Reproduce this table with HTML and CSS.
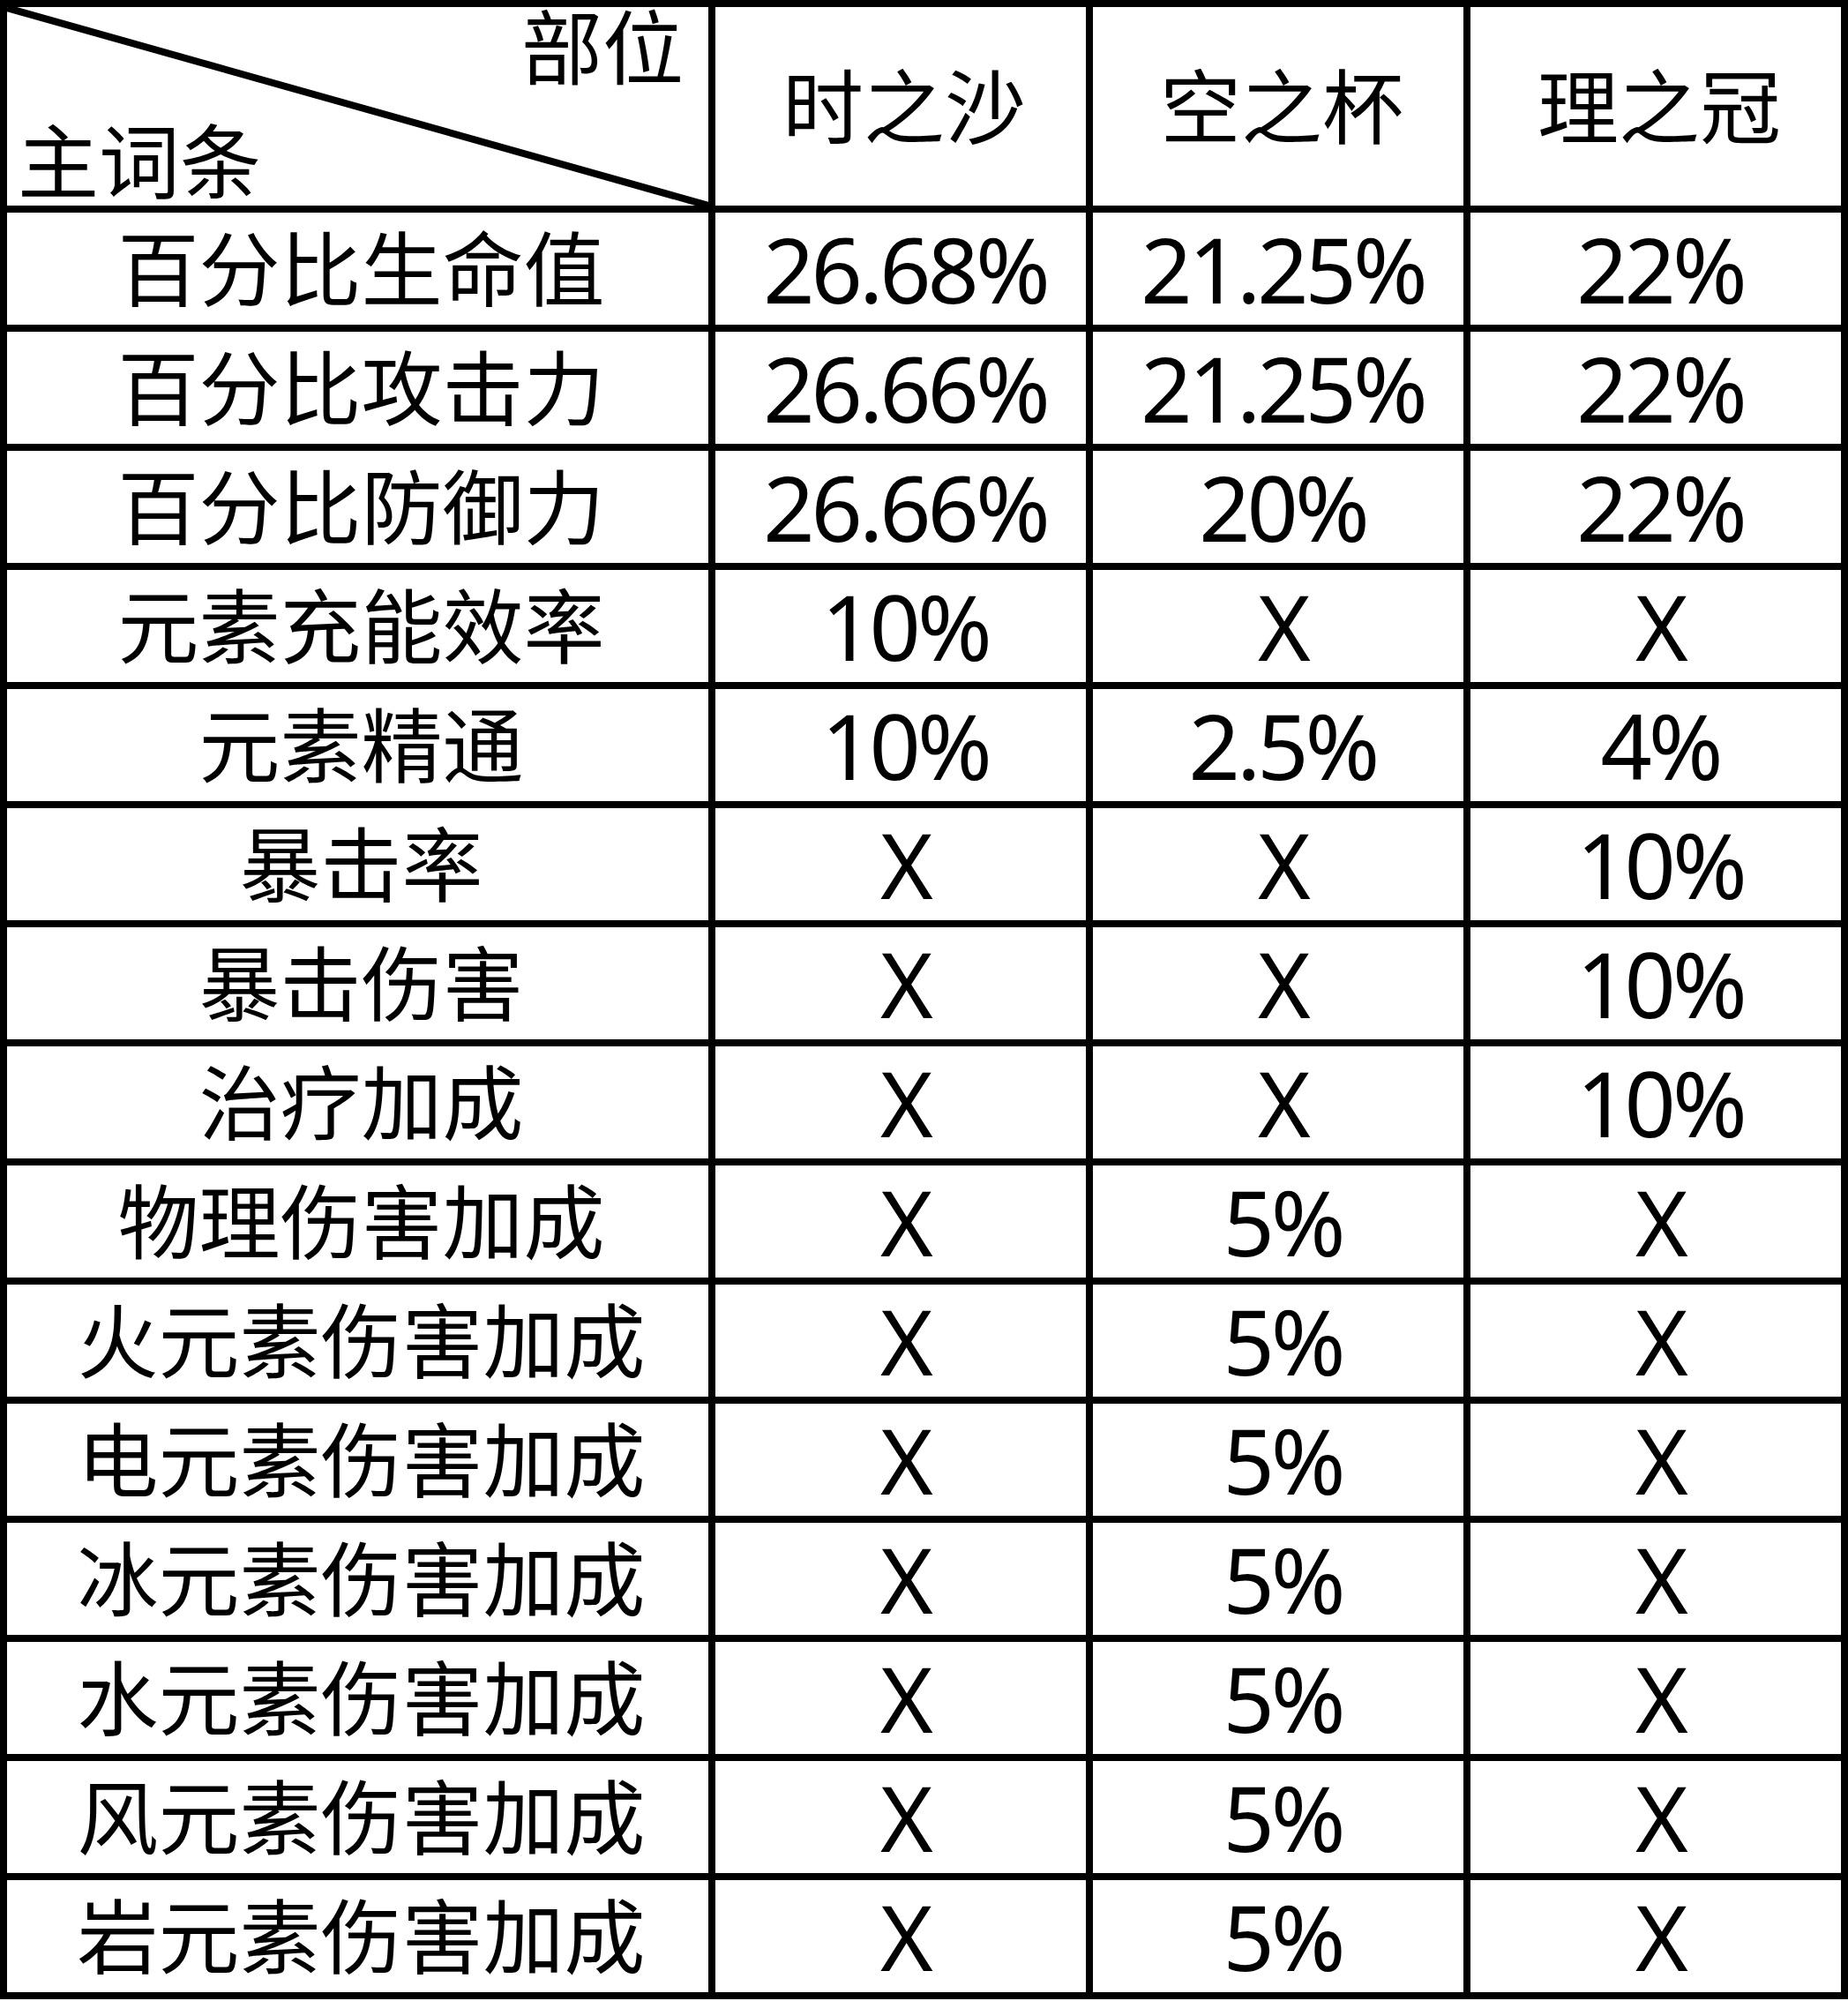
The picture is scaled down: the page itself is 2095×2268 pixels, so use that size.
FILE: index.html
```html
<!DOCTYPE html>
<html lang="zh-CN">
<head>
<meta charset="utf-8">
<title>主词条 部位</title>
<link rel="stylesheet" href="styles.css">
</head>
<body>
<div class="table">
  <div class="cell corner">
    <svg class="diag" width="100%" height="100%"><line x1="0" y1="1" x2="100%" y2="100%" stroke="#000" stroke-width="8"/></svg>
    <span class="corner-top">部位</span>
    <span class="corner-bottom">主词条</span>
  </div>
  <div class="cell">时之沙</div>
  <div class="cell">空之杯</div>
  <div class="cell">理之冠</div>

  <div class="cell">百分比生命值</div>
  <div class="cell num">26.68%</div>
  <div class="cell num">21.25%</div>
  <div class="cell num">22%</div>

  <div class="cell">百分比攻击力</div>
  <div class="cell num">26.66%</div>
  <div class="cell num">21.25%</div>
  <div class="cell num">22%</div>

  <div class="cell">百分比防御力</div>
  <div class="cell num">26.66%</div>
  <div class="cell num">20%</div>
  <div class="cell num">22%</div>

  <div class="cell">元素充能效率</div>
  <div class="cell num">10%</div>
  <div class="cell num">X</div>
  <div class="cell num">X</div>

  <div class="cell">元素精通</div>
  <div class="cell num">10%</div>
  <div class="cell num">2.5%</div>
  <div class="cell num">4%</div>

  <div class="cell">暴击率</div>
  <div class="cell num">X</div>
  <div class="cell num">X</div>
  <div class="cell num">10%</div>

  <div class="cell">暴击伤害</div>
  <div class="cell num">X</div>
  <div class="cell num">X</div>
  <div class="cell num">10%</div>

  <div class="cell">治疗加成</div>
  <div class="cell num">X</div>
  <div class="cell num">X</div>
  <div class="cell num">10%</div>

  <div class="cell">物理伤害加成</div>
  <div class="cell num">X</div>
  <div class="cell num">5%</div>
  <div class="cell num">X</div>

  <div class="cell">火元素伤害加成</div>
  <div class="cell num">X</div>
  <div class="cell num">5%</div>
  <div class="cell num">X</div>

  <div class="cell">电元素伤害加成</div>
  <div class="cell num">X</div>
  <div class="cell num">5%</div>
  <div class="cell num">X</div>

  <div class="cell">冰元素伤害加成</div>
  <div class="cell num">X</div>
  <div class="cell num">5%</div>
  <div class="cell num">X</div>

  <div class="cell">水元素伤害加成</div>
  <div class="cell num">X</div>
  <div class="cell num">5%</div>
  <div class="cell num">X</div>

  <div class="cell">风元素伤害加成</div>
  <div class="cell num">X</div>
  <div class="cell num">5%</div>
  <div class="cell num">X</div>

  <div class="cell">岩元素伤害加成</div>
  <div class="cell num">X</div>
  <div class="cell num">5%</div>
  <div class="cell num">X</div>
</div>
</body>
</html>
```

FILE: styles.css
```css
html, body {
  margin: 0;
  padding: 0;
  background: #fff;
}

.table {
  display: grid;
  grid-template-columns: 795px 420px 420px 420px;
  grid-template-rows: 225px repeat(15, 127px);
  gap: 8px;
  padding: 8px;
  width: max-content;
  background: #000;
  font-family: "Noto Sans", "Noto Sans CJK SC", sans-serif;
  font-size: 92px;
  line-height: 1;
  color: #000;
}

.cell {
  background: #fff;
  display: flex;
  align-items: center;
  justify-content: center;
  white-space: nowrap;
  padding-left: 8px;
}

.num {
  font-size: 102px;
  letter-spacing: -4px;
  padding-left: 10px;
}

.corner {
  position: relative;
  flex-direction: column;
  align-items: stretch;
  justify-content: space-between;
  padding: 0 28px 4px 12px;
}

.diag {
  position: absolute;
  left: 0;
  top: 0;
}

.corner-top {
  position: relative;
  align-self: flex-end;
  margin-top: 0;
}

.corner-bottom {
  position: relative;
  align-self: flex-start;
}
```
